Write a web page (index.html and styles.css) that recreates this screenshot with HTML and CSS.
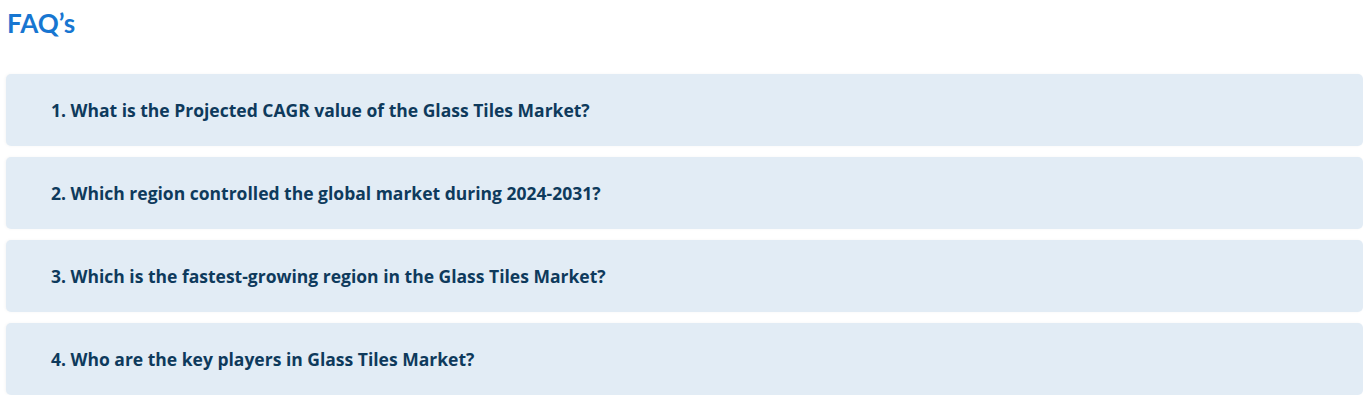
FILE: index.html
```html
<!DOCTYPE html>
<html lang="en">
<head>
    <meta charset="UTF-8">
    <title>FAQ's</title>
    <link rel="stylesheet" href="styles.css">
</head>
<body>
    <div class="faq">
        <h2 class="faq-title">FAQ’s</h2>
        <div class="faq-list">
            <div class="faq-item">1. What is the Projected CAGR value of the Glass Tiles Market?</div>
            <div class="faq-item">2. Which region controlled the global market during 2024-2031?</div>
            <div class="faq-item">3. Which is the fastest-growing region in the Glass Tiles Market?</div>
            <div class="faq-item">4. Who are the key players in Glass Tiles Market?</div>
        </div>
    </div>
</body>
</html>
```

FILE: styles.css
```css
body {
    margin: 0;
    background: #fff;
    font-family: "Lato", "Open Sans", Arial, sans-serif;
}
.faq {
    padding: 0 0 0 6px;
}
.faq-title {
    margin: 0;
    padding: 8px 0 0 1px;
    height: 74px;
    box-sizing: border-box;
    font-size: 26px;
    font-weight: 700;
    color: #1776d1;
    line-height: 30px;
}
.faq-list {
    display: flex;
    flex-direction: column;
    gap: 11px;
}
.faq-item {
    height: 72px;
    display: flex;
    align-items: center;
    padding-left: 45px;
    background: #e2ecf5;
    border-radius: 5px;
    font-family: "Open Sans", "Lato", Arial, sans-serif;
    font-size: 17.5px;
    font-weight: 700;
    color: #0e3a5c;
    box-shadow: -1px 0 3px rgba(0, 0, 0, 0.04);
}
```
